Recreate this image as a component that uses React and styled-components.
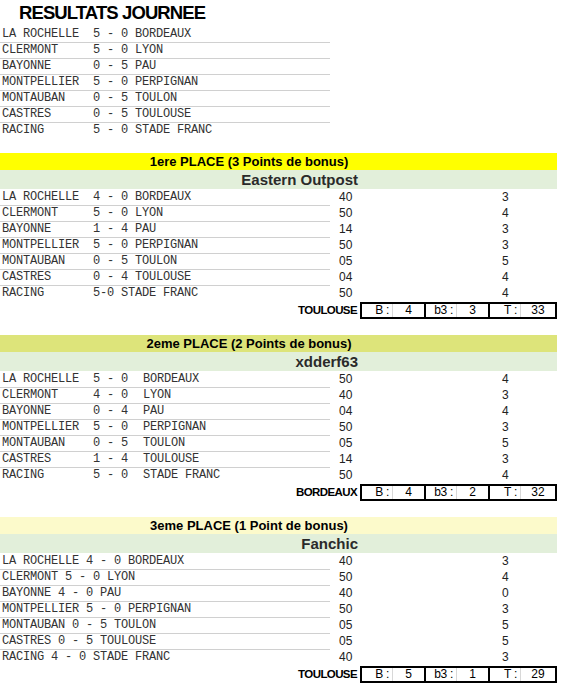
import React from 'react'
import styled, { createGlobalStyle } from 'styled-components'

const GlobalStyle = createGlobalStyle`
  body {
    margin: 0;
    background: #ffffff;
    font-family: "Liberation Sans", Arial, sans-serif;
  }
`

const Page = styled.div`
  width: 557px;
  display: flex;
  flex-direction: column;
`

const Title = styled.h1`
  margin: 0;
  height: 26px;
  line-height: 25px;
  padding-left: 19px;
  font-size: 18.5px;
  font-weight: bold;
  letter-spacing: -0.9px;
  color: #000;
`

const Spacer = styled.div`
  height: ${p => p.h}px;
`

const Row = styled.div`
  display: grid;
  grid-template-columns: 93px 42px 195px 172px 55px;
  height: 16px;
  line-height: 16px;
`

const Match = styled.div`
  grid-column: span ${p => p.span || 1};
  font-family: "Liberation Mono", "Courier New", monospace;
  font-size: 12px;
  letter-spacing: -0.2px;
  line-height: 15px;
  padding-top: 1px;
  color: #333;
  white-space: pre;
  overflow: visible;
  padding-left: ${p => p.pad || 0}px;
  box-sizing: border-box;
  border-bottom: 1px solid ${p => (p.last ? 'transparent' : '#d0d0d0')};
`

const Num = styled.div`
  font-size: 12px;
  color: #222;
  padding-left: ${p => p.pad || 0}px;
`

const Band = styled.div`
  height: ${p => p.h}px;
  line-height: ${p => p.h}px;
  background: ${p => p.bg};
  font-weight: bold;
`

const HeadText = styled.div`
  width: 498px;
  text-align: center;
  font-size: 13px;
  color: #000;
`

const NameText = styled.div`
  width: 358px;
  text-align: right;
  font-size: 15px;
  color: #2a2a2a;
`

const Footer = styled.div`
  display: flex;
  height: 18px;
  align-items: flex-start;
  padding-top: 1px;
  box-sizing: border-box;
`

const Winner = styled.div`
  width: 358px;
  padding-right: 3px;
  text-align: right;
  font-size: 11.5px;
  letter-spacing: -0.6px;
  font-weight: bold;
  line-height: 17px;
  color: #000;
`

const Boxes = styled.div`
  display: flex;
  border: 2px solid #000;
  height: 13px;
`

const ScoreBox = styled.div`
  display: grid;
  grid-template-columns: 31px 1fr;
  width: ${p => p.w}px;
  border-left: ${p => (p.first ? 'none' : '2px solid #000')};
  font-size: 12px;
  line-height: 13px;
  color: #000;
`

const BoxLabel = styled.div`
  text-align: right;
  padding-right: 3px;
  border-right: 1px solid #d8d8d8;
  letter-spacing: -0.3px;
`

const BoxValue = styled.div`
  text-align: center;
`

const results = [
  ['LA ROCHELLE', '5 - 0', 'BORDEAUX'],
  ['CLERMONT', '5 - 0', 'LYON'],
  ['BAYONNE', '0 - 5', 'PAU'],
  ['MONTPELLIER', '5 - 0', 'PERPIGNAN'],
  ['MONTAUBAN', '0 - 5', 'TOULON'],
  ['CASTRES', '0 - 5', 'TOULOUSE'],
  ['RACING', '5 - 0', 'STADE FRANC'],
]

const places = [
  {
    head: '1ere PLACE (3 Points de bonus)',
    bg: '#ffff00',
    name: 'Eastern Outpost',
    pad: 0,
    rows: [
      ['LA ROCHELLE', '4 - 0', 'BORDEAUX', '40', '3'],
      ['CLERMONT', '5 - 0', 'LYON', '50', '4'],
      ['BAYONNE', '1 - 4', 'PAU', '14', '3'],
      ['MONTPELLIER', '5 - 0', 'PERPIGNAN', '50', '3'],
      ['MONTAUBAN', '0 - 5', 'TOULON', '05', '5'],
      ['CASTRES', '0 - 4', 'TOULOUSE', '04', '4'],
      ['RACING', '5-0 STADE FRANC', null, '50', '4'],
    ],
    team: 'TOULOUSE',
    b: '4', b3: '3', t: '33',
  },
  {
    head: '2eme PLACE (2 Points de bonus)',
    bg: '#dde47a',
    name: 'xdderf63',
    pad: 8,
    rows: [
      ['LA ROCHELLE', '5 - 0', 'BORDEAUX', '50', '4'],
      ['CLERMONT', '4 - 0', 'LYON', '40', '3'],
      ['BAYONNE', '0 - 4', 'PAU', '04', '4'],
      ['MONTPELLIER', '5 - 0', 'PERPIGNAN', '50', '3'],
      ['MONTAUBAN', '0 - 5', 'TOULON', '05', '5'],
      ['CASTRES', '1 - 4', 'TOULOUSE', '14', '3'],
      ['RACING', '5 - 0', 'STADE FRANC', '50', '4'],
    ],
    team: 'BORDEAUX',
    b: '4', b3: '2', t: '32',
  },
  {
    head: '3eme PLACE (1 Point de bonus)',
    bg: '#fcfacb',
    name: 'Fanchic',
    single: true,
    rows: [
      ['LA ROCHELLE 4 - 0 BORDEAUX', '40', '3'],
      ['CLERMONT 5 - 0 LYON', '50', '4'],
      ['BAYONNE 4 - 0 PAU', '40', '0'],
      ['MONTPELLIER 5 - 0 PERPIGNAN', '50', '3'],
      ['MONTAUBAN 0 - 5 TOULON', '05', '5'],
      ['CASTRES 0 - 5 TOULOUSE', '05', '5'],
      ['RACING 4 - 0 STADE FRANC', '40', '3'],
    ],
    team: 'TOULOUSE',
    b: '5', b3: '1', t: '29',
  },
]

const PlaceRow = ({ place, row, last }) => {
  if (place.single) {
    return (
      <Row>
        <Match span={3} pad={2} last={last}>{row[0]}</Match>
        <Num pad={9}>{row[1]}</Num>
        <Num>{row[2]}</Num>
      </Row>
    )
  }
  return (
    <Row>
      <Match pad={2} last={last}>{row[0]}</Match>
      <Match span={row[2] === null ? 2 : 1} last={last}>{row[1]}</Match>
      {row[2] !== null && <Match pad={place.pad} last={last}>{row[2]}</Match>}
      <Num pad={9}>{row[3]}</Num>
      <Num>{row[4]}</Num>
    </Row>
  )
}

const Place = ({ place }) => (
  <>
    <Band h={17} bg={place.bg}>
      <HeadText>{place.head}</HeadText>
    </Band>
    <Band h={19} bg="#e2efda">
      <NameText>{place.name}</NameText>
    </Band>
    {place.rows.map((row, i) => (
      <PlaceRow key={i} place={place} row={row} last={i === place.rows.length - 1} />
    ))}
    <Footer>
      <Winner>{place.team}</Winner>
      <Boxes>
        <ScoreBox first w={62}>
          <BoxLabel>B :</BoxLabel>
          <BoxValue>{place.b}</BoxValue>
        </ScoreBox>
        <ScoreBox w={62}>
          <BoxLabel>b3 :</BoxLabel>
          <BoxValue>{place.b3}</BoxValue>
        </ScoreBox>
        <ScoreBox w={65}>
          <BoxLabel>T :</BoxLabel>
          <BoxValue>{place.t}</BoxValue>
        </ScoreBox>
      </Boxes>
    </Footer>
  </>
)

export default function App() {
  return (
    <Page>
      <GlobalStyle />
      <Title>RESULTATS JOURNEE</Title>
      {results.map((r, i) => (
        <Row key={i}>
          <Match pad={2} last={i === results.length - 1}>{r[0]}</Match>
          <Match last={i === results.length - 1}>{r[1]}</Match>
          <Match last={i === results.length - 1}>{r[2]}</Match>
        </Row>
      ))}
      <Spacer h={15} />
      <Place place={places[0]} />
      <Spacer h={16} />
      <Place place={places[1]} />
      <Spacer h={16} />
      <Place place={places[2]} />
    </Page>
  )
}
